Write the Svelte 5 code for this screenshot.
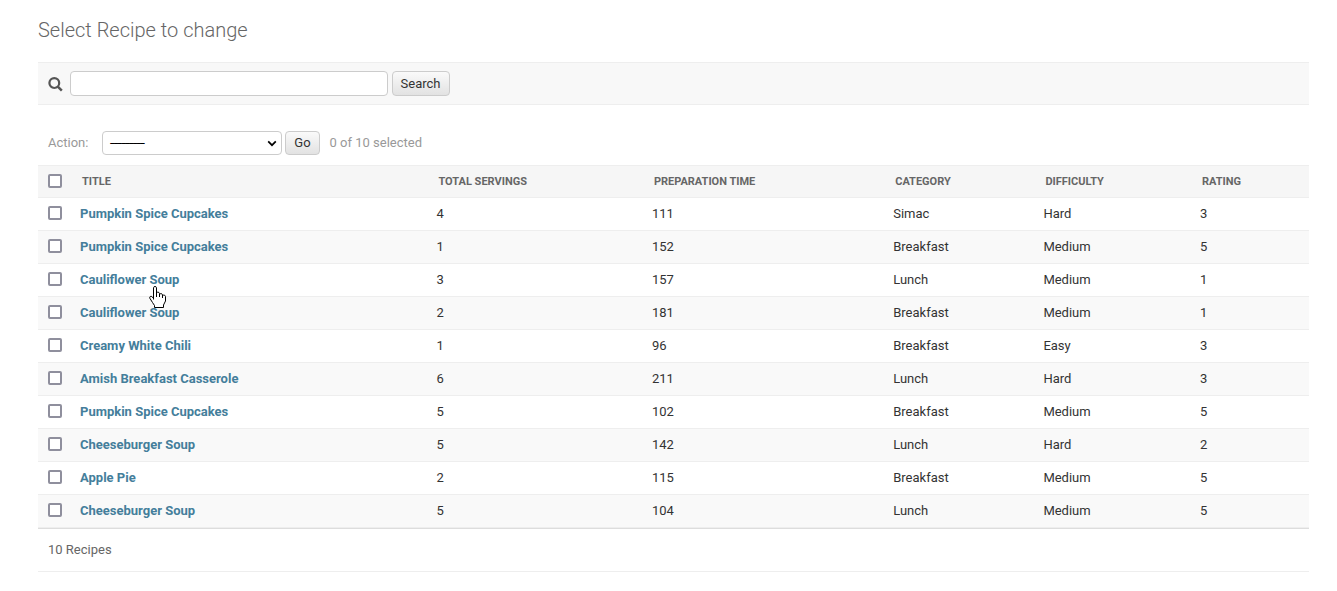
<script>
  const columns = ['Title', 'Total servings', 'Preparation time', 'Category', 'Difficulty', 'Rating'];
  const recipes = [
    ['Pumpkin Spice Cupcakes', 4, 111, 'Simac', 'Hard', 3],
    ['Pumpkin Spice Cupcakes', 1, 152, 'Breakfast', 'Medium', 5],
    ['Cauliflower Soup', 3, 157, 'Lunch', 'Medium', 1],
    ['Cauliflower Soup', 2, 181, 'Breakfast', 'Medium', 1],
    ['Creamy White Chili', 1, 96, 'Breakfast', 'Easy', 3],
    ['Amish Breakfast Casserole', 6, 211, 'Lunch', 'Hard', 3],
    ['Pumpkin Spice Cupcakes', 5, 102, 'Breakfast', 'Medium', 5],
    ['Cheeseburger Soup', 5, 142, 'Lunch', 'Hard', 2],
    ['Apple Pie', 2, 115, 'Breakfast', 'Medium', 5],
    ['Cheeseburger Soup', 5, 104, 'Lunch', 'Medium', 5]
  ];
</script>

<main>
  <h1>Select Recipe to change</h1>
  <form class="search">
    <svg class="glass" width="15" height="15" viewBox="0 0 15 15" fill="none" stroke="#555">
      <circle cx="6.3" cy="6.1" r="4.9" stroke-width="2.2" />
      <path d="M9.8 9.7L13.8 13.6" stroke-width="2.5" />
    </svg>
    <input class="query" type="text" aria-label="Search" />
    <button type="button">Search</button>
  </form>

  <div class="actions">
    <span class="label">Action:</span>
    <div class="select" role="listbox" tabindex="0">
      <span class="choice">---------</span>
      <svg width="10" height="7" viewBox="0 0 10 7" fill="none" stroke="#000" stroke-width="1.7"><path d="M1.2 1.4L5 5.2L8.8 1.4" /></svg>
    </div>
    <button type="button">Go</button>
    <span class="count">0 of 10 selected</span>
  </div>

  <div class="table">
    <div class="row head">
      <span><input type="checkbox" aria-label="Select all" /></span>
      {#each columns as column}<span class="cell">{column}</span>{/each}
    </div>
    {#each recipes as recipe}
      <div class="row">
        <span><input type="checkbox" aria-label="Select recipe" /></span>
        {#each recipe as value, i}<span class="cell" class:title={i === 0}>{value}</span>{/each}
      </div>
    {/each}
  </div>
  <p class="total">10 Recipes</p>

  <svg class="pointer" width="17" height="22" viewBox="0 0 17 22" fill="#fff" stroke="#000" stroke-width="1" stroke-linejoin="round">
    <path d="M4.5 13.5V1.7C4.5.1 7.5.1 7.5 1.7V7.5V6.8C8 5.8 10.3 6 10.5 7.3V8.5C11 7.2 13.3 7.5 13.5 8.7V9.5C14.3 8.7 16.5 9.2 16.5 10.4V15L14.5 19V21.5H5.5V19.5L3.5 16.5L.8 12.2C.2 10.5 2 9.7 3.2 10.8L4.5 12.5" />
    <path d="M7.5 7V11M10.5 8V11M13.5 9V12" fill="none" />
  </svg>
</main>

<style>
  :global(body) { background: #fff; }
  main {
    position: relative;
    box-sizing: border-box;
    height: 591px;
    padding: 18px 28px 0 38px;
    font: 13px/17px Roboto, sans-serif;
    color: #333;
  }
  h1 { margin: 0; height: 44px; font-size: 20px; line-height: 24px; font-weight: 300; color: #666; }
  .search {
    display: flex;
    align-items: center;
    box-sizing: border-box;
    height: 43px;
    padding: 0 10px;
    background: #f8f8f8;
    border-top: 1px solid #eee;
    border-bottom: 1px solid #eee;
  }
  .glass { margin: 2px 7px 0 0; }
  .query {
    box-sizing: border-box;
    width: 318px;
    height: 25px;
    margin: 0 4px 0 0;
    border: 1px solid #ccc;
    border-radius: 4px;
    background: #fff;
    outline: 0;
  }
  button {
    box-sizing: border-box;
    height: 25px;
    width: 58px;
    padding: 0 1px 0 0;
    border: 1px solid #ccc;
    border-radius: 4px;
    background: linear-gradient(#fafafa, #e2e2e2);
    font: 13px/17px Roboto, sans-serif;
    color: #333;
  }
  .actions { display: flex; align-items: center; height: 24px; padding: 26px 10px 10px; color: #999; }
  .label { width: 54px; padding-bottom: 2px; }
  .count { padding-bottom: 2px; }
  .select {
    display: flex;
    align-items: center;
    justify-content: space-between;
    box-sizing: border-box;
    width: 180px;
    height: 24px;
    padding: 0 4px 0 7px;
    margin-right: 3px;
    border: 1px solid #ccc;
    border-radius: 4px;
    background: #fff;
    color: #000;
  }
  .choice { padding: 0 0 2px; letter-spacing: .2px; text-shadow: .5px 0 #000, 1px 0 #000; }
  .actions button { width: 35px; height: 24px; margin-right: 9.5px; padding: 0 0 1px; }
  .table { border-bottom: 1px solid #ddd; }
  .row {
    display: grid;
    grid-template-columns: 32px 356.4px 215.5px 241.3px 150.2px 156.6px 1fr;
    align-items: center;
    box-sizing: border-box;
    height: 33px;
    padding: 0 0 1px 10px;
    border-bottom: 1px solid #eee;
  }
  .row > span:first-child { display: flex; padding-bottom: 1px; }
  .row.head > span:first-child { padding-bottom: 0; }
  .row:nth-child(odd) { background: #f9f9f9; }
  .row.head {
    background: #f6f6f6;
    border-top: 1px solid #eee;
    font-size: 11px;
    font-weight: 700;
    text-transform: uppercase;
    color: #666;
  }
  .head .cell { padding-left: 2px; }
  .title { font-weight: 700; color: #447e9b; }
  input[type='checkbox'] {
    appearance: none;
    box-sizing: border-box;
    width: 14px;
    height: 14px;
    margin: 0;
    border: 2px solid #8f8f9d;
    border-radius: 2px;
    background: #fff;
  }
  .total {
    box-sizing: border-box;
    height: 43px;
    margin: 0;
    padding: 12px 10px;
    border-bottom: 1px solid #eee;
    color: #666;
  }
  .pointer { position: absolute; left: 149px; top: 286px; }
</style>
